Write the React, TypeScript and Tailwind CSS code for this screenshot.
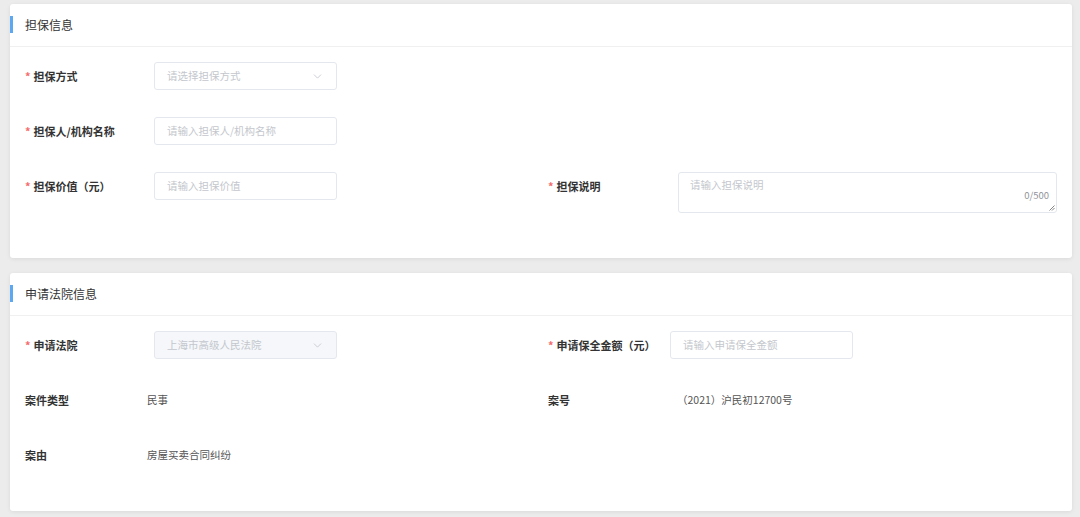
import { ChevronDown } from "lucide-react";

const FONT = { fontFamily: '"Noto Sans CJK SC", "Noto Sans", sans-serif' };

function Section({ title, children }: { title: string; children: React.ReactNode }) {
  return (
    <section className="rounded-[3px] bg-white shadow-[0_1px_4px_rgba(0,0,0,0.08)]">
      <header className="relative flex h-[43px] items-center border-b border-[#f0f0f0] pl-[15px]">
        <span className="absolute left-0 top-[12px] h-[17px] w-[3px] bg-[#5ea8f2]" />
        <h2 className="text-[12px] text-[#333]">{title}</h2>
      </header>
      <div className="px-[15px] pt-[15px]">{children}</div>
    </section>
  );
}

function Label({ text, required, width = "w-[129px]" }: { text: string; required?: boolean; width?: string }) {
  return (
    <div className={`flex h-[28px] shrink-0 items-center text-[11px] font-bold text-[#333] ${width}`}>
      {required && <span className="mr-[3px] text-[#f56c6c]">*</span>}
      {text}
    </div>
  );
}

function Input({ placeholder, select, disabled }: { placeholder: string; select?: boolean; disabled?: boolean }) {
  return (
    <div
      className={`flex h-[28px] w-[183px] items-center justify-between rounded-[3px] border border-[#e4e7ed] px-[12px] text-[10.5px] text-[#c4c7cd] ${
        disabled ? "bg-[#f5f7fa]" : "bg-white"
      }`}
    >
      <span>{placeholder}</span>
      {select && <ChevronDown size={13} strokeWidth={1.5} className="text-[#c0c4cc]" />}
    </div>
  );
}

export default function App() {
  return (
    <main style={FONT} className="min-h-[517px] w-[1080px] bg-[#ececec] pb-[6px] pl-[10px] pr-[8px] pt-[4px]">
      <div className="flex flex-col gap-[15px]">
        <Section title="担保信息">
          <div className="pb-[18px]">
            <div className="mb-[27px] flex">
              <Label text="担保方式" required />
              <Input placeholder="请选择担保方式" select />
            </div>
            <div className="mb-[27px] flex">
              <Label text="担保人/机构名称" required />
              <Input placeholder="请输入担保人/机构名称" />
            </div>
            <div className="mb-[27px] grid grid-cols-[523px_1fr]">
              <div className="flex">
                <Label text="担保价值（元）" required />
                <Input placeholder="请输入担保价值" />
              </div>
              <div className="flex">
                <Label text="担保说明" required width="w-[130px]" />
                <div className="relative h-[41px] flex-1 rounded-[3px] border border-[#e4e7ed] bg-white px-[11px] pt-[4px] text-[10.5px] text-[#c4c7cd]">
                  请输入担保说明
                  <span className="absolute bottom-[10px] right-[7px] text-[9.5px] text-[#909399]">0/500</span>
                  <svg className="absolute bottom-[1px] right-[1px]" width="6" height="6" viewBox="0 0 6 6">
                    <path d="M5.5 0.5 L0.5 5.5 M5.5 3 L3 5.5" stroke="#777" strokeWidth="0.9" />
                  </svg>
                </div>
              </div>
            </div>
          </div>
        </Section>

        <Section title="申请法院信息">
          <div className="pb-[15px]">
            <div className="mb-[27px] grid grid-cols-[523px_1fr]">
              <div className="flex">
                <Label text="申请法院" required />
                <Input placeholder="上海市高级人民法院" select disabled />
              </div>
              <div className="flex">
                <Label text="申请保全金额（元）" required width="w-[122px]" />
                <Input placeholder="请输入申请保全金额" />
              </div>
            </div>
            <div className="mb-[27px] grid grid-cols-[523px_1fr]">
              <div className="flex">
                <Label text="案件类型" width="w-[122px]" />
                <span className="flex h-[28px] items-center text-[10.5px] text-[#555]">民事</span>
              </div>
              <div className="flex">
                <Label text="案号" width="w-[129px]" />
                <span className="flex h-[28px] items-center text-[10.5px] text-[#555]">（2021）沪民初12700号</span>
              </div>
            </div>
            <div className="mb-[27px] flex">
              <Label text="案由" width="w-[122px]" />
              <span className="flex h-[28px] items-center text-[10.5px] text-[#555]">房屋买卖合同纠纷</span>
            </div>
          </div>
        </Section>
      </div>
    </main>
  );
}
